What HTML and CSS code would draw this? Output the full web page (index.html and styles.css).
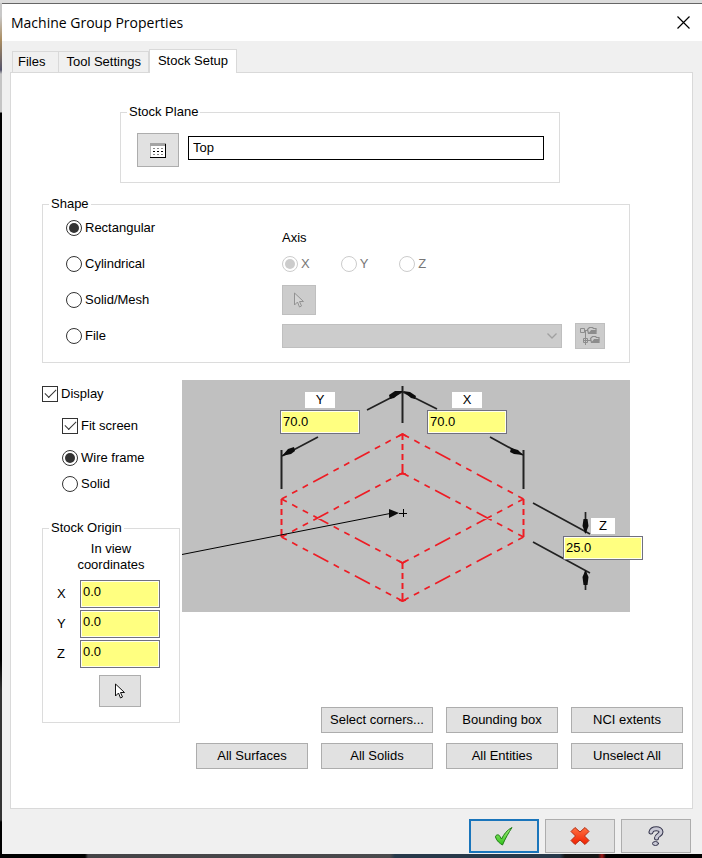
FILE: index.html
```html
<!DOCTYPE html>
<html lang="en">
<head>
<meta charset="utf-8">
<title>Machine Group Properties</title>
<link rel="stylesheet" href="styles.css">
</head>
<body>
<main class="dialog">
  <header class="titlebar">
    <h1>Machine Group Properties</h1>
    <button class="close" type="button" aria-label="Close">
      <svg width="13" height="13" viewBox="0 0 13 13"><path d="M.5.5l12 12M12.5.5l-12 12" fill="none" stroke="#000" stroke-width="1.2"/></svg>
    </button>
  </header>

  <nav class="tabs" role="tablist">
    <button class="tab" type="button" role="tab">Files</button>
    <button class="tab" type="button" role="tab">Tool Settings</button>
    <button class="tab active" type="button" role="tab" aria-selected="true">Stock Setup</button>
  </nav>

  <section class="panel" role="tabpanel">
    <fieldset class="group plane">
      <legend>Stock Plane</legend>
      <div class="plane-row">
        <button class="btn plane-pick" type="button" aria-label="Select plane">
          <svg width="16" height="15" viewBox="0 0 16 15" shape-rendering="crispEdges">
            <path d="M0 0h16v15H0z" fill="#fff"/>
            <path d="M0 0h16v3H0z" fill="#a4a4a4"/>
            <path d="M.5 3v11" stroke="#b8b8b8"/>
            <path d="M15.500 1v14M0 14.500h16" stroke="#000"/>
            <path d="M3 5.500h10M3 11.500h10" stroke="#888" stroke-dasharray="2 2"/>
            <path d="M3 8.500h10" stroke="#000" stroke-dasharray="2 2"/>
          </svg>
        </button>
        <input class="plane-name" type="text" value="Top" aria-label="Stock plane">
      </div>
    </fieldset>

    <fieldset class="group shape">
      <legend>Shape</legend>
      <div class="shape-grid">
        <label class="opt"><input type="radio" name="shape" checked>Rectangular</label>
        <span class="axis-title" id="axis">Axis</span>
        <label class="opt"><input type="radio" name="shape">Cylindrical</label>
        <div class="axes" role="radiogroup" aria-labelledby="axis">
          <label class="opt off"><input type="radio" name="axis" checked disabled>X</label>
          <label class="opt off"><input type="radio" name="axis" disabled>Y</label>
          <label class="opt off"><input type="radio" name="axis" disabled>Z</label>
        </div>
        <label class="opt"><input type="radio" name="shape">Solid/Mesh</label>
        <button class="btn solid-pick" type="button" disabled aria-label="Select solid">
          <svg width="10" height="16" viewBox="0 0 10 16"><path d="M.5 1v12l3-3 2 5 2-1-2-4.500h4z" fill="#d4d4d4" stroke="#929292"/></svg>
        </button>
        <label class="opt"><input type="radio" name="shape">File</label>
        <div class="file-row">
          <div class="select-wrap">
            <select disabled aria-label="Stock file"><option></option></select>
            <svg width="10" height="6" viewBox="0 0 10 6"><path d="M.5.5L5 5 9.500.5" fill="none" stroke="#a0a0a0" stroke-width="1.300"/></svg>
          </div>
          <button class="btn browse" type="button" disabled aria-label="Browse files">
            <svg width="20" height="18" viewBox="0 0 20 18" fill="none" stroke="#8c8c8c">
              <path d="M.5 1.500h4v4h-4zM4 3.500h4M5.500 3v15M3.500 11.500h4v4h-4zM3 13.500h8"/>
              <path d="M8.500 6.500l-1-4 2-2h3l1 1h2.500v5z" stroke-width="1.200"/>
              <path d="M9 6.500l2-3h5l-1 3z" fill="#8c8c8c"/>
              <path d="M11.500 15.500l-1-4 2-2h3l1 1h2.500v5z" stroke-width="1.200"/>
              <path d="M12 15.500l2-3h5l-1 3z" fill="#8c8c8c"/>
            </svg>
          </button>
        </div>
      </div>
    </fieldset>

    <div class="lower">
      <div class="side">
        <div class="display">
          <label class="opt"><input type="checkbox" checked>Display</label>
          <div class="display-sub">
            <label class="opt"><input type="checkbox" checked>Fit screen</label>
            <div class="modes">
              <label class="opt"><input type="radio" name="mode" checked>Wire frame</label>
              <label class="opt"><input type="radio" name="mode">Solid</label>
            </div>
          </div>
        </div>
        <fieldset class="group origin">
          <legend>Stock Origin</legend>
          <p>In view<br>coordinates</p>
          <div class="coords">
            <label for="ox">X</label><input class="num" id="ox" type="text" value="0.0">
            <label for="oy">Y</label><input class="num" id="oy" type="text" value="0.0">
            <label for="oz">Z</label><input class="num" id="oz" type="text" value="0.0">
          </div>
          <button class="btn origin-pick" type="button" aria-label="Select origin">
            <svg width="10" height="16" viewBox="0 0 10 16"><path d="M.5 1v12l3-3 2 5 2-1-2-4.500h4z" fill="#fff" stroke="#111"/></svg>
          </button>
        </fieldset>
      </div>

      <div class="work">
        <div class="diagram">
          <svg width="448" height="232" viewBox="182 380 448 232" fill="none" aria-hidden="true">
            <g stroke="#ee1c24" stroke-width="1.700">
              <path stroke-dasharray="17 6 6 6 6 6" stroke-dashoffset="11" d="M281.500 499L402.500 434M281.500 499L402.500 563M281.500 537L402.500 473M281.500 537L402.500 601M523.500 499L402.500 434M523.500 499L402.500 563M523.500 537L402.500 473M523.500 537L402.500 601"/>
              <path stroke-width="2" stroke-dasharray="6 4 6 4 6 4 9" d="M281.500 499V537M402.500 434V473M523.500 499V537M402.500 563V601"/>
              <path d="M399 436l3.500-2 3.500 2M399 474h7M399 561l3.500 2 3.500-2M399 600l3.500 1 3.500-1"/>
            </g>
            <g stroke="#222" stroke-width="1.700">
              <path d="M402.500 386V423M281.500 450V489M523.500 450V489" stroke-width="2"/>
              <path d="M367 410L402 392M437 409L403 392M318 437L282 456M490 437L523 455M533 503L590 534M533 542L590 573M585.500 512V533M585.500 571V590"/>
            </g>
            <g fill="#0c0c0c">
              <path d="M403 391l-8 0-6 4 1 4 4-1zM403 391l7 1 6 4-1 3-4-1zM282 456l6-7 6-2 1 4-4 3zM523 455l-5-5-7-2-1 4 4 2zM585.500 534l-3-8 1-7h4l1 7zM585.500 570l-3 7 1 8h4l1-8z"/>
              <path d="M389 509v9l10-5z"/>
            </g>
            <path stroke="#000" d="M182 554.500L390 513.500M399 513.500h8M403.500 509v8"/>
          </svg>
          <label class="dim-label dim-y" for="dy">Y</label>
          <input class="num dim dim-y-in" id="dy" type="text" value="70.0">
          <label class="dim-label dim-x" for="dx">X</label>
          <input class="num dim dim-x-in" id="dx" type="text" value="70.0">
          <label class="dim-label dim-z" for="dz">Z</label>
          <input class="num dim dim-z-in" id="dz" type="text" value="25.0">
        </div>
        <div class="actions">
          <button class="btn first" type="button">Select corners...</button>
          <button class="btn" type="button">Bounding box</button>
          <button class="btn" type="button">NCI extents</button>
          <button class="btn" type="button">All Surfaces</button>
          <button class="btn" type="button">All Solids</button>
          <button class="btn" type="button">All Entities</button>
          <button class="btn" type="button">Unselect All</button>
        </div>
      </div>
    </div>
  </section>

  <footer class="footer">
    <button class="btn ok" type="button" aria-label="OK">
      <svg width="20" height="20" viewBox="0 0 20 20">
        <defs><linearGradient id="g1" x1="0" y1="0" x2="0" y2="1"><stop offset="0" stop-color="#a8f07c"/><stop offset="1" stop-color="#2fc21a"/></linearGradient></defs>
        <path d="M1.500 11c0-2.500 3.500-3 4.500-.5l1.500 2.500C10 8 13 4 18 1.500 14.500 7 11.500 12 8.500 19c-2.500-1.500-6-4-7-8z" fill="url(#g1)" stroke="#1f7d16"/>
      </svg>
    </button>
    <button class="btn" type="button" aria-label="Cancel">
      <svg width="20" height="20" viewBox="0 0 20 20">
        <defs><linearGradient id="g2" x1="0" y1="0" x2="0" y2="1"><stop offset="0" stop-color="#ff7242"/><stop offset="1" stop-color="#f02000"/></linearGradient></defs>
        <path d="M5 1.500l5 4.500 5-4.500 4 4L14.500 10l4.500 4.500-4 4-5-4.500-5 4.500-4-4L5.500 10 1 5.500z" fill="url(#g2)" stroke="#b52a10" stroke-linejoin="round"/>
      </svg>
    </button>
    <button class="btn" type="button" aria-label="Help">
      <svg width="18" height="20" viewBox="0 0 18 20" fill="none" stroke-linecap="round">
        <path d="M4 6c1-4.500 10-4.500 10 0 0 3-4.500 3-4.500 6" stroke="#34344c" stroke-width="5"/>
        <ellipse cx="8.500" cy="17.500" rx="3" ry="2" fill="#c8c8d4" stroke="#34344c"/>
        <path d="M4 6c1-4.500 10-4.500 10 0 0 3-4.500 3-4.500 6" stroke="#c8c8d4" stroke-width="3"/>
      </svg>
    </button>
  </footer>
</main>
</body>
</html>
```

FILE: styles.css
```css
* { box-sizing: border-box; }

body {
  margin: 0;
  padding: 3px 0 4px 2px;
  font: 13px/16px "Liberation Sans", Arial, sans-serif;
  color: #000;
  background:
    linear-gradient(#dcdcdc, #dcdcdc) 0 0 / 100% 3px no-repeat,
    linear-gradient(90deg, #000 85px, #444346 88px, #4a4a4d 390px, #27394a 395px, #27394a 560px, #151515 565px, #151515 598px, #a01818 602px, #000 606px) 0 100% / 100% 4px no-repeat,
    linear-gradient(#c8c8c8 0 16px, #a98c60 40px, #55556c 70px, #c4c4c4 74px 112px, #000 113px 660px, #333 690px 820px, #000 822px) 0 0 / 2px 100% no-repeat;
}

button, input, select { font: inherit; color: inherit; }
button { padding: 0; cursor: default; }
svg { display: block; }

.dialog { background: #f0f0f0; border-top: 1px solid #666; }

.titlebar {
  display: flex;
  align-items: center;
  justify-content: space-between;
  height: 37px;
  padding: 0 12px 0 9px;
  background: #fff;
}
.titlebar h1 { margin: 0; font: 14px/20px "Open Sans", "Noto Sans", sans-serif; }
.close { border: 0; background: none; }

.tabs {
  display: flex;
  align-items: flex-end;
  height: 31px;
  padding-left: 10px;
}
.tab {
  height: 21px;
  padding: 0 13px 0 5px;
  border: 1px solid #d9d9d9;
  border-bottom: 0;
  background: #f0f0f0;
}
.tab + .tab { padding: 0 7px; border-left: 0; }
.tab.active {
  position: relative;
  height: 24px;
  margin-bottom: -1px;
}
.tab + .tab.active {
  padding: 0 8px 2px;
  border-left: 1px solid #d9d9d9;
  background: #fff;
}

.panel {
  margin: 0 9px 0 8px;
  padding: 31px 0 39px;
  border: 1px solid #d9d9d9;
  background: #fff;
}

.group {
  min-width: 0;
  margin: 0;
  padding: 0 6px;
  border: 1px solid #dcdcdc;
}
.group legend { padding: 0 2px; }

.plane { margin: 0 132px 0 109px; }
.plane-row {
  display: flex;
  align-items: center;
  gap: 9px;
  padding: 13px 9px 15px 10px;
}
.plane-pick { width: 42px; height: 34px; }
.plane-name {
  flex: 1;
  min-width: 0;
  height: 24px;
  margin-bottom: 4px;
  padding: 0 4px 2px;
  border: 1px solid #000;
  border-radius: 0;
  background: #fff;
}

.btn {
  display: flex;
  align-items: center;
  justify-content: center;
  border: 1px solid #adadad;
  border-radius: 0;
  background: #e1e1e1;
}
.btn:disabled { border-color: #bfbfbf; background: #ccc; }

.opt { display: flex; align-items: center; gap: 3px; }
.opt.off { color: #777; }
.opt input {
  appearance: none;
  display: grid;
  place-items: center;
  flex: none;
  width: 16px;
  height: 16px;
  margin: 0;
  border: 1px solid #333;
  background: #fff;
}
.opt input[type="radio"] { border-radius: 50%; }
.opt input[type="radio"]:checked::after {
  content: "";
  width: 10px;
  height: 10px;
  border-radius: 50%;
  background: #333;
}
.opt input[type="checkbox"]:checked::after {
  content: "";
  width: 10px;
  height: 5px;
  margin-bottom: 4px;
  border: solid #333;
  border-width: 0 0 1px 1px;
  transform: rotate(-45deg);
}
.opt input:disabled { border-color: #ccc; }
.opt input[type="radio"]:disabled:checked::after { background: #ccc; }

.shape { margin: 13px 62px 0 31px; }
.shape-grid {
  display: grid;
  grid-template-columns: 216px 1fr;
  grid-auto-rows: 32px;
  row-gap: 4px;
  align-items: center;
  padding: 0 18px 10px 17px;
}
.axis-title { align-self: end; line-height: 12px; }
.axes { display: flex; gap: 31px; }
.solid-pick { width: 34px; height: 30px; }
.file-row { display: flex; align-items: center; gap: 13px; }
.select-wrap { position: relative; flex: 1; }
.select-wrap select {
  appearance: none;
  display: block;
  width: 100%;
  height: 24px;
  border: 1px solid #bfbfbf;
  border-radius: 0;
  background: #ccc;
  opacity: 1;
}
.select-wrap svg { position: absolute; top: 9px; right: 5px; }
.browse { width: 30px; height: 26px; }

.lower {
  display: grid;
  grid-template-columns: 138px 1fr;
  gap: 2px;
  margin: 17px 9px 0 31px;
}
.side { padding-top: 6px; }
.display, .display-sub { display: grid; gap: 16px; }
.display-sub { padding-left: 20px; }
.modes { display: grid; gap: 10px; }

.origin { margin-top: 28px; padding-bottom: 15px; }
.origin p { margin: 5px 0 7px; text-align: center; }
.coords {
  display: grid;
  grid-template-columns: 23px 80px;
  gap: 2px 0;
  align-items: center;
  padding-left: 8px;
}
.num {
  width: 80px;
  padding: 0 2px 2px;
  border: 1px solid #707080;
  border-radius: 0;
  background: #ffff80;
  box-shadow: inset 0 0 0 1px #fffff0;
}
.coords .num { height: 28px; padding-bottom: 6px; }
.origin-pick { width: 42px; height: 32px; margin: 7px 0 0 50px; }

.diagram {
  position: relative;
  min-height: 232px;
  margin-right: 53px;
  background: #c0c0c0;
}
.dim { position: absolute; height: 24px; }
.dim-label {
  position: absolute;
  width: 30px;
  height: 16px;
  background: #fff;
  text-align: center;
}
.dim-y { left: 123px; top: 12px; }
.dim-y-in { left: 98px; top: 30px; }
.dim-x { left: 270px; top: 12px; }
.dim-x-in { left: 245px; top: 30px; }
.dim-z { left: 409px; top: 138px; width: 24px; }
.dim-z-in { left: 381px; top: 156px; }

.actions {
  display: grid;
  grid-template-columns: repeat(4, 112px);
  justify-content: end;
  gap: 10px 13px;
  margin-top: 95px;
}
.actions .btn { height: 26px; }
.actions .first { grid-column: 2; }

.footer {
  display: flex;
  justify-content: flex-end;
  gap: 6px;
  padding: 10px 11px 1px;
}
.footer .btn { width: 70px; height: 34px; }
.footer .ok { border: 2px solid #1a75bb; }
```
